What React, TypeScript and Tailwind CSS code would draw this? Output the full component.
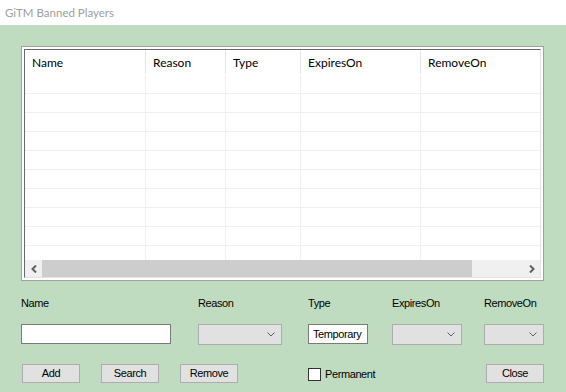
const columns = [
  { name: "Name", w: "w-[121px]" },
  { name: "Reason", w: "w-[80px]" },
  { name: "Type", w: "w-[75px]" },
  { name: "ExpiresOn", w: "w-[120px]" },
  { name: "RemoveOn", w: "w-[120px]" },
];

const rows = Array.from({ length: 10 });

function Chevron({ dir }: { dir: "left" | "right" }) {
  return (
    <svg width="6" height="8" viewBox="0 0 6 8" className="block">
      <polyline
        points={dir === "left" ? "5,0.5 1.5,4 5,7.5" : "1,0.5 4.5,4 1,7.5"}
        fill="none"
        stroke="#606060"
        strokeWidth="2"
      />
    </svg>
  );
}

function Combo({ w }: { w: string }) {
  return (
    <div
      className={`${w} h-[21px] bg-[#e1e1e1] border border-[#adadad] flex items-center justify-end pr-[6px]`}
    >
      <svg width="8" height="5" viewBox="0 0 8 5" className="block">
        <polyline points="0.5,0.5 4,4 7.5,0.5" fill="none" stroke="#606060" strokeWidth="1" />
      </svg>
    </div>
  );
}

function Button({ label, className = "" }: { label: string; className?: string }) {
  return (
    <button
      className={`w-[58px] h-[19px] bg-[#e1e1e1] border border-[#adadad] text-[11px] tracking-[-0.4px] text-black leading-none ${className}`}
    >
      {label}
    </button>
  );
}

export default function App() {
  return (
    <div className="w-[566px] h-[392px] bg-[#c0dcc0] flex flex-col overflow-hidden font-['Liberation_Sans',sans-serif]">
      {/* title bar */}
      <div className="h-[25px] bg-white flex items-center pl-[5px] text-[11.5px] text-[#a0a0a0] font-['Lato',sans-serif]">
        GiTM Banned Players
      </div>

      <div className="pt-[21px] pl-[21px] pr-[22px] flex flex-col">
        {/* list view */}
        <div className="w-[523px] h-[235px] border border-[#a0a0a0] bg-white p-[2px] box-border">
          <div className="h-full border-t border-l border-t-[#696969] border-l-[#696969] border-r border-b border-r-[#e3e3e3] border-b-[#e3e3e3] flex flex-col overflow-hidden">
            <div className="h-[24px] flex shrink-0 font-['Lato',sans-serif] text-[12px] text-black">
              {columns.map((c) => (
                <div
                  key={c.name}
                  className={`${c.w} shrink-0 h-full border-r border-[#e5e5e5] pl-[7px] pt-[2px] flex items-center`}
                >
                  {c.name}
                </div>
              ))}
            </div>
            <div className="flex-1 overflow-hidden pt-[1px]">
              {rows.map((_, i) => (
                <div key={i} className="h-[19px] flex border-b border-[#f0f0f0]">
                  {columns.map((c) => (
                    <div key={c.name} className={`${c.w} shrink-0 h-full border-r border-[#f0f0f0]`} />
                  ))}
                </div>
              ))}
            </div>
            {/* horizontal scrollbar */}
            <div className="h-[17px] shrink-0 bg-[#f0f0f0] flex">
              <div className="w-[17px] flex items-center justify-center">
                <Chevron dir="left" />
              </div>
              <div className="w-[430px] h-full bg-[#cdcdcd]" />
              <div className="flex-1" />
              <div className="w-[17px] flex items-center justify-center">
                <Chevron dir="right" />
              </div>
            </div>
          </div>
        </div>

        {/* labels */}
        <div className="mt-[15px] h-[14px] flex items-center text-[11px] tracking-[-0.4px] text-black">
          <div className="w-[177px]">Name</div>
          <div className="w-[110px]">Reason</div>
          <div className="w-[84px]">Type</div>
          <div className="w-[92px]">ExpiresOn</div>
          <div>RemoveOn</div>
        </div>

        {/* inputs */}
        <div className="mt-[14px] flex items-start">
          <div className="w-[177px]">
            <div className="w-[150px] h-[20px] bg-white border border-[#7a7a7a]" />
          </div>
          <div className="w-[110px]">
            <Combo w="w-[84px]" />
          </div>
          <div className="w-[84px]">
            <div className="w-[60px] h-[20px] bg-white border border-[#7a7a7a] pl-[4px] flex items-center text-[11px] tracking-[-0.4px] text-black">
              Temporary
            </div>
          </div>
          <div className="w-[92px]">
            <Combo w="w-[70px]" />
          </div>
          <Combo w="w-[60px]" />
        </div>

        {/* buttons */}
        <div className="mt-[19px] flex items-center">
          <Button label="Add" className="ml-[1px]" />
          <Button label="Search" className="ml-[21px]" />
          <Button label="Remove" className="ml-[21px]" />
          <label className="ml-[70px] flex items-center gap-[4px] text-[11px] tracking-[-0.4px] text-black pt-[2px]">
            <span className="w-[13px] h-[13px] bg-white border border-[#333333] block" />
            Permanent
          </label>
          <Button label="Close" className="ml-auto" />
        </div>
      </div>
    </div>
  );
}
